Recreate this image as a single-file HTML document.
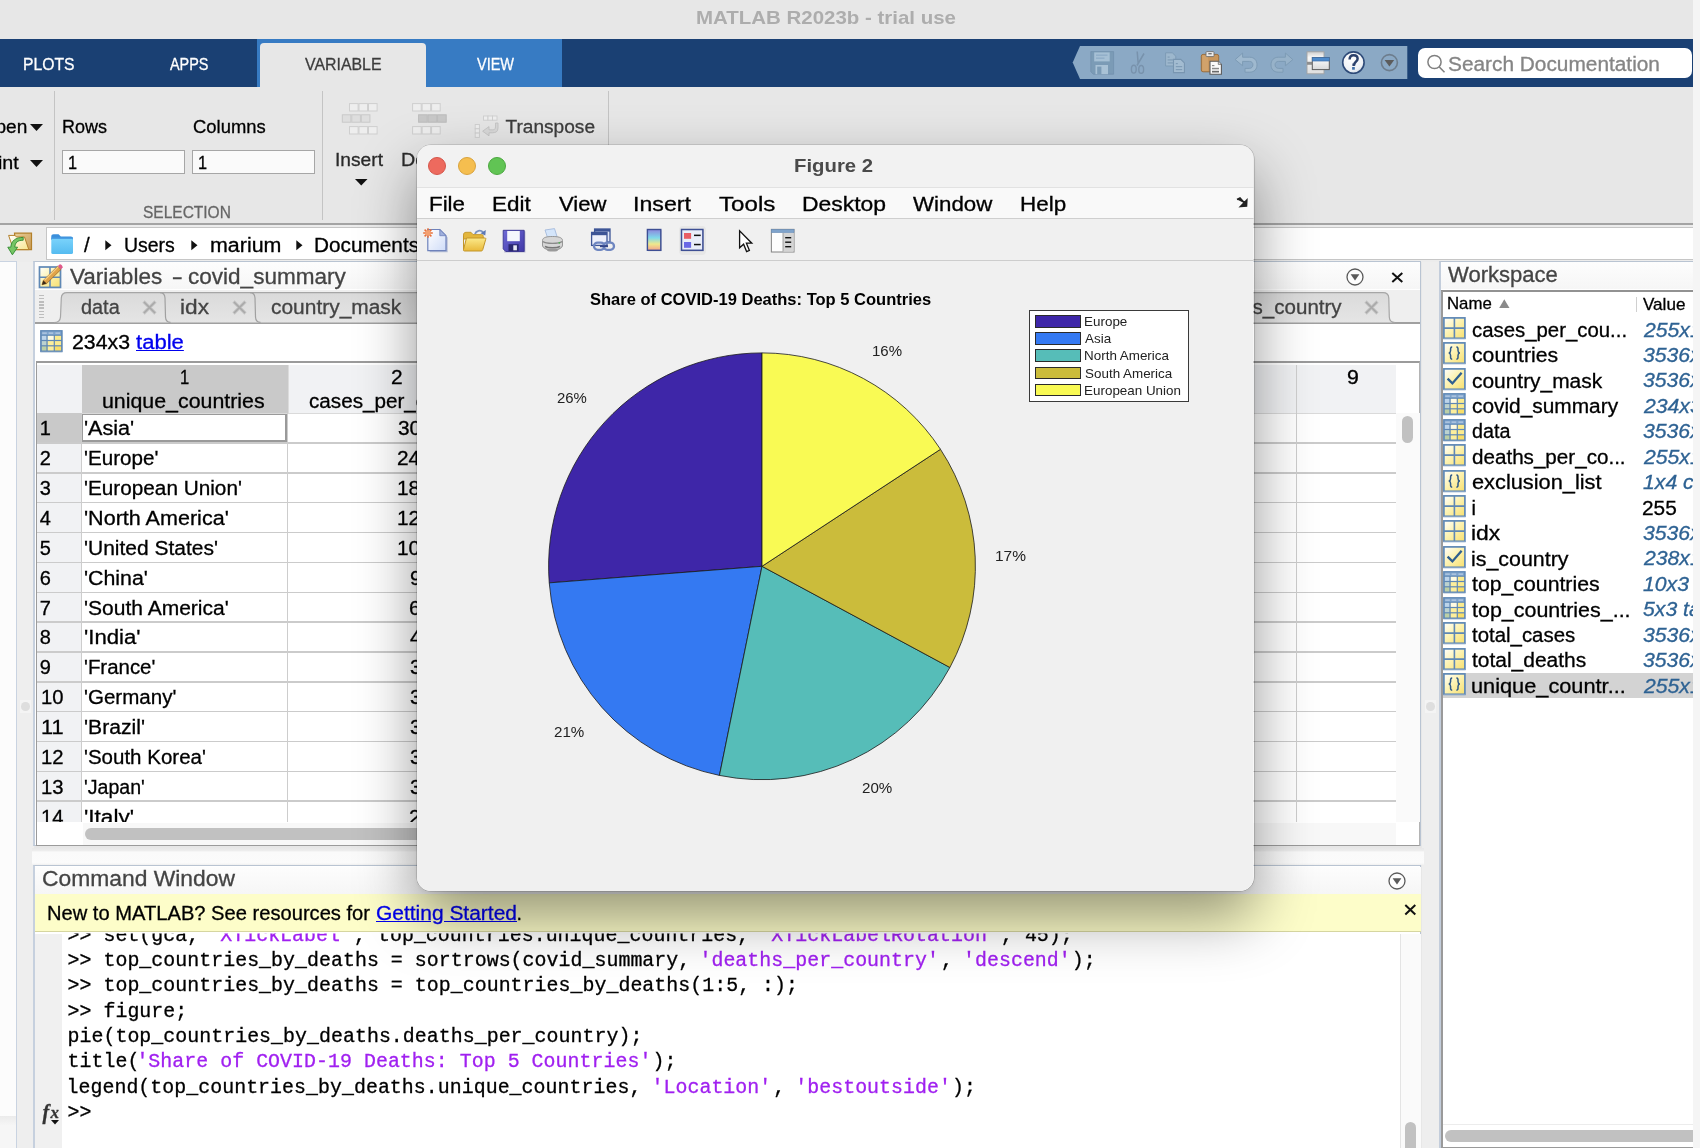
<!DOCTYPE html>
<html><head><meta charset="utf-8">
<style>
*{box-sizing:border-box;margin:0;padding:0}
html,body{width:1700px;height:1148px;overflow:hidden;background:#f5f5f5;font-family:"Liberation Sans",sans-serif;}
.a{position:absolute}
.t{position:absolute;white-space:pre;line-height:1;color:#000;-webkit-text-stroke:0.3px}
#win{position:absolute;left:0;top:0;width:1693px;height:1148px;background:#e7e7e7;overflow:hidden}
#win,#fig{will-change:transform}
#fig{position:absolute;left:0;top:0;width:1700px;height:1148px;clip-path:inset(145px 446.5px 257px 417px round 14px);background:#f0f0f0}
#figsh{position:absolute;left:417px;top:145px;width:836.5px;height:746px;border-radius:14px;box-shadow:0 0 0 0.6px rgba(0,0,0,0.22),0 26px 60px rgba(0,0,0,0.42),0 2px 5px rgba(0,0,0,0.06)}
.ns{-webkit-text-stroke:0}

.sep{position:absolute;width:1px;background:#c4c4c4}
.hl{position:absolute;height:1px;background:#c8c8c8}
.vl{position:absolute;width:1px;background:#c8c8c8}

</style></head><body>
<div id="win">
<div class="a" style="left:0;top:39px;width:1693px;height:48px;background:#1a4073"></div>
<div class="a" style="left:256.5px;top:39px;width:305px;height:48px;background:#377bc3"></div>
<div class="a" style="left:259.5px;top:43px;width:166px;height:44px;background:#e7e7e7;border-radius:4px 4px 0 0"></div>
<svg class="a" style="left:1072px;top:46px" width="336" height="33"><polygon points="0.7,16.5 8,0 335.3,0 335.3,33 8,33" fill="#8ba9c5"/></svg>
<div class="a" style="left:1417.8px;top:48px;width:274.4px;height:30.2px;background:#fff;border-radius:7px"></div>
<svg class="a" style="left:1425px;top:52px" width="22" height="22"><circle cx="9.5" cy="10" r="6.6" fill="none" stroke="#808080" stroke-width="1.5"/><line x1="14.3" y1="15" x2="19.5" y2="20.3" stroke="#808080" stroke-width="1.6"/></svg>
<div class="sep" style="left:54px;top:91px;height:129px"></div>
<div class="sep" style="left:322px;top:91px;height:129px"></div>
<div class="sep" style="left:607.5px;top:91px;height:129px"></div>
<svg class="a" style="left:30px;top:123.5px" width="14" height="8"><polygon points="0,0 13,0 6.5,7" fill="#111"/></svg>
<svg class="a" style="left:30px;top:159.5px" width="14" height="8"><polygon points="0,0 13,0 6.5,7" fill="#111"/></svg>
<div class="a" style="left:62px;top:149.5px;width:123px;height:24.3px;background:#fafafa;border:1px solid #a6a6a6"></div>
<div class="a" style="left:192px;top:149.5px;width:123px;height:24.3px;background:#fafafa;border:1px solid #a6a6a6"></div>
<svg class="a" style="left:354.5px;top:179px" width="14" height="8"><polygon points="0,0 12.5,0 6.25,6.5" fill="#111"/></svg>
<div class="a" style="left:0;top:223px;width:1693px;height:2px;background:#a4a4a4"></div>
<div class="a" style="left:0;top:225px;width:1693px;height:37px;background:#ececec"></div>
<div class="a" style="left:46px;top:227px;width:1660px;height:32.5px;background:#fff;border:1px solid #c6c6c6"></div>
<svg class="a" style="left:105px;top:239.5px" width="8" height="11"><polygon points="0.3,0.3 6.5,5.3 0.3,10.3" fill="#111"/></svg>
<svg class="a" style="left:190.5px;top:239.5px" width="8" height="11"><polygon points="0.3,0.3 6.5,5.3 0.3,10.3" fill="#111"/></svg>
<svg class="a" style="left:295.5px;top:239.5px" width="8" height="11"><polygon points="0.3,0.3 6.5,5.3 0.3,10.3" fill="#111"/></svg>
<div class="a" style="left:17px;top:262px;width:17px;height:890px;background:#eeeeee"></div>
<div class="a" style="left:1422px;top:262px;width:17px;height:890px;background:#eeeeee"></div>
<div class="a" style="left:0;top:261.3px;width:17px;height:854.7px;background:#fcfcfc;border-right:1.2px solid #c9d3e1;border-top:1px solid #c9d3e1"></div>
<div class="a" style="left:0;top:1116px;width:17px;height:32px;background:linear-gradient(#ebebeb,#f6f6f6 30%);border-right:1.2px solid #c9d3e1"></div>
<div class="a" style="left:19.5px;top:700px;width:11.5px;height:12.5px;background:#f4f4f4"></div><div class="a" style="left:21px;top:702px;width:8.5px;height:8.5px;border-radius:50%;background:#dedede"></div>
<div class="a" style="left:1424.5px;top:700px;width:11.5px;height:12.5px;background:#f4f4f4"></div><div class="a" style="left:1426px;top:702px;width:8.5px;height:8.5px;border-radius:50%;background:#dedede"></div>
<div class="a" style="left:32.8px;top:260.7px;width:1388.7px;height:585.8px;background:#fff;border:1.5px solid #b9c4d2;border-left:2.2px solid #c6d0de"></div>
<div class="a" style="left:35px;top:262.2px;width:1385px;height:27.3px;background:linear-gradient(#fdfdfd,#f6f6f6)"></div>
<div class="a" style="left:35px;top:289.5px;width:1385px;height:33px;background:#efefef"></div>
<div class="a" style="left:35px;top:321.6px;width:1385px;height:2px;background:#a0a0a0"></div>
<div class="a" style="left:38.8px;top:295.3px;width:4.8px;height:23px;background:repeating-linear-gradient(#bdbdbd 0,#bdbdbd 1.3px,transparent 1.3px,transparent 3.1px)"></div>
<svg class="a" style="left:52px;top:290px" width="1345" height="34"><defs><linearGradient id="gtb60" x1="0" y1="0" x2="0" y2="1"><stop offset="0" stop-color="#dadada"/><stop offset="1" stop-color="#e5e5e5"/></linearGradient></defs><path d="M2,32.5 C6.5,32.5 8.2,31 8.5,27 L9.3,8 C9.5,4 11,2.6 15,2.6 L1331,2.6 C1335,2.6 1336.6,4 1336.8,8 L1337.3,27 C1337.5,31 1339,32.5 1343,32.5" fill="url(#gtb60)" stroke="#a6a6a6" stroke-width="1.2"/></svg>
<svg class="a" style="left:157.3px;top:290px" width="16" height="34"><path d="M3,2.6 C6.5,2.6 7.8,4 8,8 L8.5,27 C8.7,31 10,32.3 13.5,32.3" fill="none" stroke="#a0a0a0" stroke-width="1.2"/></svg>
<svg class="a" style="left:247.3px;top:290px" width="16" height="34"><path d="M3,2.6 C6.5,2.6 7.8,4 8,8 L8.5,27 C8.7,31 10,32.3 13.5,32.3" fill="none" stroke="#a0a0a0" stroke-width="1.2"/></svg>
<svg class="a" style="left:141.5px;top:300px" width="15" height="15"><path d="M1.5,1.5 L13.5,13.5 M13.5,1.5 L1.5,13.5" stroke="#c4c4c4" stroke-width="3.2" fill="none"/><path d="M2,2 L13,13 M13,2 L2,13" stroke="#a8a8a8" stroke-width="1.5" fill="none"/></svg>
<svg class="a" style="left:231.5px;top:300px" width="15" height="15"><path d="M1.5,1.5 L13.5,13.5 M13.5,1.5 L1.5,13.5" stroke="#c4c4c4" stroke-width="3.2" fill="none"/><path d="M2,2 L13,13 M13,2 L2,13" stroke="#a8a8a8" stroke-width="1.5" fill="none"/></svg>
<svg class="a" style="left:1364px;top:300px" width="15" height="15"><path d="M1.5,1.5 L13.5,13.5 M13.5,1.5 L1.5,13.5" stroke="#c4c4c4" stroke-width="3.2" fill="none"/><path d="M2,2 L13,13 M13,2 L2,13" stroke="#a8a8a8" stroke-width="1.5" fill="none"/></svg>
<svg class="a" style="left:1345px;top:266.5px" width="20" height="20"><circle cx="10" cy="10" r="7.999999999999999" fill="#fdfdfd" stroke="#5a5a5a" stroke-width="1.3"/><polygon points="5.6,7.3 14.4,7.3 10,13.6" fill="#5a5a5a"/></svg>
<svg class="a" style="left:1391px;top:272px" width="13" height="11"><path d="M1.3,1 L11.3,10 M11.3,1 L1.3,10" stroke="#111" stroke-width="2" fill="none"/></svg>
<div class="a" style="left:35.5px;top:360.5px;width:1384.0px;height:485.5px;border:2px solid #9b9b9b;border-bottom-width:1.5px;border-left-width:1.5px;border-right:1.2px solid #b4b4b4;background:#fff"></div>
<div class="a" style="left:37px;top:364.5px;width:44.5px;height:48.5px;background:#f1f2f4"></div>
<div class="a" style="left:81.5px;top:364.5px;width:206px;height:48.5px;background:#c9c9c9"></div>
<div class="a" style="left:288.5px;top:364.5px;width:1107px;height:48.5px;background:#f1f2f4"></div>
<div class="vl" style="left:287.5px;top:364.5px;height:48.5px;background:#dcdcdc"></div>
<div class="vl" style="left:1296px;top:364.5px;height:48.5px;background:#cfcfcf"></div>
<div class="hl" style="left:37px;top:412.8px;width:1358.5px;height:1px;background:#dadada"></div>
<div class="a" style="left:37px;top:413.15px;width:44.5px;height:408.85px;background:#f1f2f4"></div>
<div class="a" style="left:37px;top:413.15px;width:44.5px;height:29.85px;background:#c9c9c9"></div>
<div class="hl" style="left:37px;top:442.25px;width:1358.5px;height:1.5px;background:#cbcbcb"></div>
<div class="hl" style="left:37px;top:472.10px;width:1358.5px;height:1.5px;background:#cbcbcb"></div>
<div class="hl" style="left:37px;top:501.95px;width:1358.5px;height:1.5px;background:#cbcbcb"></div>
<div class="hl" style="left:37px;top:531.80px;width:1358.5px;height:1.5px;background:#cbcbcb"></div>
<div class="hl" style="left:37px;top:561.65px;width:1358.5px;height:1.5px;background:#cbcbcb"></div>
<div class="hl" style="left:37px;top:591.50px;width:1358.5px;height:1.5px;background:#cbcbcb"></div>
<div class="hl" style="left:37px;top:621.35px;width:1358.5px;height:1.5px;background:#cbcbcb"></div>
<div class="hl" style="left:37px;top:651.20px;width:1358.5px;height:1.5px;background:#cbcbcb"></div>
<div class="hl" style="left:37px;top:681.05px;width:1358.5px;height:1.5px;background:#cbcbcb"></div>
<div class="hl" style="left:37px;top:710.90px;width:1358.5px;height:1.5px;background:#cbcbcb"></div>
<div class="hl" style="left:37px;top:740.75px;width:1358.5px;height:1.5px;background:#cbcbcb"></div>
<div class="hl" style="left:37px;top:770.60px;width:1358.5px;height:1.5px;background:#cbcbcb"></div>
<div class="hl" style="left:37px;top:800.45px;width:1358.5px;height:1.5px;background:#cbcbcb"></div>
<div class="vl" style="left:81.0px;top:413.15px;width:1.3px;height:408.85px;background:#cdcdcd"></div>
<div class="vl" style="left:287.0px;top:413.15px;width:1.3px;height:408.85px;background:#cdcdcd"></div>
<div class="vl" style="left:1295.5px;top:413.15px;width:1.3px;height:408.85px;background:#cdcdcd"></div>
<div class="a" style="left:82.3px;top:413.75px;width:204.6px;height:28.25px;border:1.5px solid #9a9a9a;border-bottom-width:2.4px;border-right-width:2px;background:#fff"></div>
<div class="a" style="left:37px;top:822px;width:1382px;height:22.5px;background:#fff"></div>
<div class="a" style="left:37px;top:822px;width:1382px;height:22.5px;background:#fff"></div>
<div class="a" style="left:82.5px;top:822.5px;width:1313px;height:22px;background:#f8f8f8"></div>
<div class="a" style="left:85px;top:828.2px;width:1100px;height:11.6px;border-radius:6px;background:#c1c1c1"></div>
<div class="a" style="left:1395.5px;top:413px;width:24px;height:409px;background:#fafafa"></div>
<div class="a" style="left:1402px;top:415.6px;width:11.4px;height:27px;border-radius:6px;background:#c1c1c1"></div>
<div class="a" style="left:32px;top:847.6px;width:1392px;height:17px;background:linear-gradient(#e8e8e8 0%,#ececec 14%,#fafafa 24%,#fbfbfb 88%,#f0f0f0 100%)"></div>
<div class="a" style="left:32.8px;top:865px;width:1388.7px;height:290px;background:#fff;border:1.5px solid #b9c4d2;border-left:2.2px solid #c6d0de"></div>
<div class="a" style="left:35px;top:866.5px;width:1386px;height:27px;background:linear-gradient(#fdfdfd,#f6f6f6)"></div>
<div class="a" style="left:35px;top:893.5px;width:1385px;height:1.5px;background:#d5d5d5"></div>
<svg class="a" style="left:1387px;top:870.6px" width="20" height="20"><circle cx="10" cy="10" r="7.999999999999999" fill="#fdfdfd" stroke="#5a5a5a" stroke-width="1.3"/><polygon points="5.6,7.3 14.4,7.3 10,13.6" fill="#5a5a5a"/></svg>
<div class="a" style="left:35px;top:894.4px;width:1386.2px;height:37.6px;background:#fdfdc9;border-bottom:1.5px solid #d6d6a0"></div>
<svg class="a" style="left:1404px;top:904px" width="13" height="12"><path d="M1.3,1 L11.3,10.5 M11.3,1 L1.3,10.5" stroke="#111" stroke-width="2" fill="none"/></svg>
<div class="a" style="left:35px;top:933.5px;width:27px;height:220px;background:#f0f0f0"></div>
<div class="a" style="left:1399.5px;top:933.5px;width:21px;height:220px;background:#fafafa;border-left:1px solid #e4e4e4"></div>
<div class="a" style="left:1405px;top:1121.5px;width:11.4px;height:40px;border-radius:6px;background:#c1c1c1"></div>
<svg class="a" style="left:51px;top:1119.5px" width="9" height="5"><polygon points="0,0 8,0 4,4.5" fill="#111"/></svg>
<div class="a" style="left:1438.6px;top:260.7px;width:262px;height:900px;background:#fff;border:1.5px solid #b9c4d2;border-left:2.4px solid #c3cddb"></div>
<div class="a" style="left:1441px;top:262.2px;width:260px;height:27px;background:linear-gradient(#fdfdfd,#f6f6f6)"></div>
<div class="a" style="left:1441px;top:289.7px;width:260px;height:1.9px;background:#929292"></div>
<div class="a" style="left:1441px;top:291px;width:1.7px;height:860px;background:#9a9a9a"></div>
<svg class="a" style="left:1498.5px;top:299px" width="11" height="10"><polygon points="5.3,0.3 10.5,9 0.2,9" fill="#8a8a8a"/></svg>
<div class="a" style="left:1636px;top:296.5px;width:1.4px;height:15.5px;background:#d0d0d0"></div>
<div class="a" style="left:1443.4px;top:672.8px;width:260px;height:24.8px;background:#d3d3d3"></div>
<div class="a" style="left:1443px;top:1124px;width:260px;height:1.3px;background:#ececec"></div>
<div class="a" style="left:1445px;top:1130px;width:300px;height:11.7px;border-radius:6px;background:#c1c1c1"></div>
<div class="a" style="left:1441px;top:1146.5px;width:260px;height:1.5px;background:#9a9a9a"></div>
<svg class="a" style="left:1089px;top:50px" width="27" height="26"><path d="M1.8,1.6 L24.6,1.6 L24.6,24.2 L4.3,24.2 L1.8,21.7 Z" fill="#7b9bb6" stroke="#7291ad" stroke-width="0.8"/><rect x="5.2" y="2.4" width="15.5" height="9" fill="#a6c0d5"/><rect x="7" y="4.6" width="11.5" height="1.1" fill="#8ba9c3"/><rect x="7" y="7.6" width="8.5" height="1.1" fill="#8ba9c3"/><rect x="6.5" y="15" width="12.5" height="9.2" fill="#a9c2d6"/><rect x="8.2" y="16.6" width="4.2" height="7.6" fill="#7b9bb6"/></svg>
<svg class="a" style="left:1128px;top:50px" width="20" height="26"><path d="M9.2,1.5 L10.2,14 M16,3.5 L9,15.5" stroke="#7892ac" stroke-width="1.5" fill="none"/><ellipse cx="5.8" cy="19.2" rx="2.4" ry="3.9" fill="none" stroke="#7892ac" stroke-width="1.4"/><ellipse cx="13.2" cy="19.4" rx="2.4" ry="3.9" fill="none" stroke="#7892ac" stroke-width="1.4"/></svg>
<svg class="a" style="left:1163px;top:50px" width="25" height="26"><path d="M2.6,2.8 L9.3,2.8 L12.8,6.2 L12.8,16 L2.6,16 Z" fill="#9db7cd" stroke="#7d9bb5" stroke-width="1"/><path d="M10.5,9.4 L17.8,9.4 L21.4,12.9 L21.4,22.6 L10.5,22.6 Z" fill="#a3bcd1" stroke="#7895b0" stroke-width="1.1"/><g fill="#7f9cb6"><rect x="4.6" y="6.5" width="2" height="1.2"/><rect x="4.6" y="9.3" width="6" height="1.2"/><rect x="4.6" y="12.3" width="6" height="1.2"/><rect x="12.8" y="13" width="2" height="1.2"/><rect x="12.8" y="16" width="6.4" height="1.2"/><rect x="12.8" y="19" width="6.4" height="1.2"/></g></svg>
<svg class="a" style="left:1199px;top:49px" width="26" height="28"><rect x="2.3" y="5.4" width="17.4" height="17.4" rx="1.8" fill="#c8965c" stroke="#9c6f3e" stroke-width="1"/><rect x="3.2" y="6.3" width="6" height="15.6" fill="#d7aa74" opacity="0.6"/><rect x="7" y="2.6" width="8" height="5" rx="0.8" fill="#ececec" stroke="#707070" stroke-width="0.9"/><rect x="9.3" y="4" width="3.4" height="1.4" fill="#777"/><path d="M11,12.3 L19.3,12.3 L22.4,15.4 L22.4,25.2 L11,25.2 Z" fill="#fafafa" stroke="#5a5a5a" stroke-width="1.1"/><path d="M19.3,12.3 L19.3,15.4 L22.4,15.4" fill="#ddd" stroke="#5a5a5a" stroke-width="0.7"/><g fill="#8a8a8a"><rect x="13" y="16" width="2.4" height="1.2"/><rect x="13" y="18.8" width="7" height="1.5"/><rect x="13" y="21.8" width="7" height="1.7" fill="#6a6a6a"/></g></svg>
<svg class="a" style="left:1233px;top:50px" width="27" height="26"><path d="M2.2,9.6 L9.6,3 L9.6,7.2 L16.5,7.2 C21.5,7.2 24,10.5 24,14.8 C24,19 21.5,22.2 16.5,22.2 L12,22.2 L12,18.4 L16.3,18.4 C18.7,18.4 19.9,16.8 19.9,14.8 C19.9,12.8 18.7,11.4 16.3,11.4 L9.6,11.4 L9.6,15.8 Z" fill="#9fb9cf" stroke="#7d9bb5" stroke-width="1"/></svg>
<svg class="a" style="left:1268px;top:50px" width="27" height="26"><path d="M24.8,9.6 L17.4,3 L17.4,7.2 L10.5,7.2 C5.5,7.2 3,10.5 3,14.8 C3,19 5.5,22.2 10.5,22.2 L15,22.2 L15,18.4 L10.7,18.4 C8.3,18.4 7.1,16.8 7.1,14.8 C7.1,12.8 8.3,11.4 10.7,11.4 L17.4,11.4 L17.4,15.8 Z" fill="#97b2c9" stroke="#7d9bb5" stroke-width="1"/></svg>
<svg class="a" style="left:1304px;top:49px" width="28" height="28"><defs><linearGradient id="gw1" x1="0" y1="0" x2="0" y2="1"><stop offset="0" stop-color="#cfcfcf"/><stop offset="0.25" stop-color="#f7f7f7"/><stop offset="1" stop-color="#dedede"/></linearGradient><linearGradient id="gw2" x1="0" y1="0" x2="0" y2="1"><stop offset="0" stop-color="#ffffff"/><stop offset="1" stop-color="#d9d9d9"/></linearGradient></defs><rect x="3" y="2.8" width="17" height="22" fill="url(#gw1)" stroke="#a2a2a2" stroke-width="0.9"/><rect x="3" y="12.8" width="5" height="3" fill="#8e8e8e"/><rect x="8.3" y="8.6" width="17" height="12" fill="url(#gw2)" stroke="#5c5c5c" stroke-width="1"/><rect x="8.3" y="8.6" width="17" height="3.4" fill="#4d8acb" stroke="#3c6ea8" stroke-width="0.7"/></svg>
<svg class="a" style="left:1340px;top:49px" width="28" height="28"><defs><radialGradient id="gh" cx="0.4" cy="0.3" r="0.8"><stop offset="0" stop-color="#ffffff"/><stop offset="0.7" stop-color="#eef1f5"/><stop offset="1" stop-color="#c9d2de"/></radialGradient></defs><circle cx="13.4" cy="13.6" r="10.7" fill="url(#gh)" stroke="#2d4a78" stroke-width="1.6"/><path d="M9.6,10.6 C9.6,7.6 11.4,6.2 13.6,6.2 C16,6.2 17.6,7.7 17.6,9.8 C17.6,12.6 14.2,12.8 14.2,15.8 L12.4,15.8" fill="none" stroke="#2b406b" stroke-width="2.5" stroke-linejoin="round"/><rect x="12.1" y="18" width="2.7" height="2.7" fill="#3f6ea8"/></svg>
<svg class="a" style="left:1378px;top:51px" width="24" height="24"><circle cx="11.4" cy="11.6" r="8" fill="none" stroke="#6d7d8d" stroke-width="1.6"/><polygon points="6.6,9 16.2,9 11.4,15.6" fill="#5c5c5c"/></svg>
<svg class="a" style="left:340px;top:102px" width="40" height="34"><rect x="9.5" y="1.6" width="8.6" height="7.4" fill="#eeeeee" stroke="#cfcfcf" stroke-width="1"/><rect x="19.0" y="1.6" width="8.6" height="7.4" fill="#eeeeee" stroke="#cfcfcf" stroke-width="1"/><rect x="28.5" y="1.6" width="8.6" height="7.4" fill="#eeeeee" stroke="#cfcfcf" stroke-width="1"/><rect x="2.3" y="12.8" width="8.6" height="7.4" fill="#dedede" stroke="#c9c9c9" stroke-width="1"/><rect x="11.8" y="12.8" width="8.6" height="7.4" fill="#dedede" stroke="#c9c9c9" stroke-width="1"/><rect x="21.3" y="12.8" width="8.6" height="7.4" fill="#dedede" stroke="#c9c9c9" stroke-width="1"/><rect x="9.5" y="24.6" width="8.6" height="7.4" fill="#eeeeee" stroke="#cfcfcf" stroke-width="1"/><rect x="19.0" y="24.6" width="8.6" height="7.4" fill="#eeeeee" stroke="#cfcfcf" stroke-width="1"/><rect x="28.5" y="24.6" width="8.6" height="7.4" fill="#eeeeee" stroke="#cfcfcf" stroke-width="1"/></svg>
<svg class="a" style="left:410px;top:102px" width="40" height="34"><rect x="2.6" y="1.6" width="8.6" height="7.4" fill="#eeeeee" stroke="#cfcfcf" stroke-width="1"/><rect x="12.1" y="1.6" width="8.6" height="7.4" fill="#eeeeee" stroke="#cfcfcf" stroke-width="1"/><rect x="21.6" y="1.6" width="8.6" height="7.4" fill="#eeeeee" stroke="#cfcfcf" stroke-width="1"/><rect x="8.6" y="12.8" width="8.6" height="7.4" fill="#c8c8c8" stroke="#bdbdbd" stroke-width="1"/><rect x="18.1" y="12.8" width="8.6" height="7.4" fill="#c8c8c8" stroke="#bdbdbd" stroke-width="1"/><rect x="27.6" y="12.8" width="8.6" height="7.4" fill="#c8c8c8" stroke="#bdbdbd" stroke-width="1"/><rect x="2.6" y="24.6" width="8.6" height="7.4" fill="#eeeeee" stroke="#cfcfcf" stroke-width="1"/><rect x="12.1" y="24.6" width="8.6" height="7.4" fill="#eeeeee" stroke="#cfcfcf" stroke-width="1"/><rect x="21.6" y="24.6" width="8.6" height="7.4" fill="#eeeeee" stroke="#cfcfcf" stroke-width="1"/></svg>
<svg class="a" style="left:473px;top:114px" width="28" height="26"><g fill="#f0f0f0" stroke="#cfcfcf" stroke-width="0.9"><rect x="10.5" y="2" width="4.5" height="4.2"/><rect x="15" y="2" width="4.5" height="4.2"/><rect x="19.5" y="2" width="4.5" height="4.2"/><rect x="2.2" y="10.5" width="4.2" height="4.3"/><rect x="2.2" y="14.8" width="4.2" height="4.3"/><rect x="2.2" y="19.1" width="4.2" height="4.3"/></g><path d="M22.5,9 L25,9 L25,14 C25,17.5 23,18.8 19.5,18.8 L16,18.8 L16,21.8 L9.6,17.2 L16,12.6 L16,15.8 L19.5,15.8 C21.5,15.8 22.5,15 22.5,13 Z" fill="#d9d9d9" stroke="#c2c2c2" stroke-width="0.8"/></svg>
<svg class="a" style="left:50px;top:232px" width="25" height="24"><defs><linearGradient id="gbf" x1="0" y1="0" x2="0" y2="1"><stop offset="0" stop-color="#7ad3fb"/><stop offset="1" stop-color="#55bbf0"/></linearGradient></defs><path d="M1.3,4.5 C1.3,3 2.2,2.2 3.6,2.2 L8.6,2.2 L10.8,4.4 L20.8,4.4 C22.3,4.4 23,5.2 23,6.6 L23,8 L1.3,8 Z" fill="#3b8fdb"/><rect x="1.3" y="6.4" width="21.7" height="15.6" rx="1.6" fill="url(#gbf)"/><rect x="1.3" y="5.6" width="21.7" height="1.4" fill="#4a9fe4"/></svg>
<svg class="a" style="left:6px;top:231px" width="28" height="26"><defs><linearGradient id="guf" x1="0" y1="0" x2="1" y2="1"><stop offset="0" stop-color="#e9cf98"/><stop offset="1" stop-color="#c99a55"/></linearGradient><linearGradient id="guf2" x1="0" y1="0" x2="1" y2="1"><stop offset="0" stop-color="#ffffff"/><stop offset="1" stop-color="#f7e58c"/></linearGradient></defs><path d="M8.5,2.2 L25.5,2.2 L25.5,18.6 L10,18.6 Z" fill="url(#guf)" stroke="#b3802a" stroke-width="1.2"/><path d="M2.6,4.4 L9,4.4 L10.5,6 L18.5,6 L22.8,18.6 L7.5,18.6 Z" fill="url(#guf2)" stroke="#b3802a" stroke-width="1"/><path d="M17.2,9.2 C11,9.2 9.2,12 8.8,16.2 L11.6,16.2 L6.4,23.8 L1.8,16.2 L4.8,16.2 C5.2,9.8 9.5,6.4 17.2,6.4 Z" fill="#76c563" stroke="#2f8a2f" stroke-width="0.9"/></svg>
<svg class="a" style="left:0;top:0" width="0" height="0"><defs><linearGradient id="gy" x1="0" y1="0" x2="1" y2="1"><stop offset="0" stop-color="#ffffff"/><stop offset="0.45" stop-color="#fdf3b4"/><stop offset="1" stop-color="#f7df6e"/></linearGradient><linearGradient id="gyb" x1="0" y1="0" x2="1" y2="1"><stop offset="0" stop-color="#fffbe0"/><stop offset="1" stop-color="#f8e070"/></linearGradient></defs></svg>
<svg class="a" style="left:1443.2px;top:317.0px" width="24" height="24"><rect x="0.9" y="0.9" width="21" height="20.4" fill="url(#gy)" stroke="#5f88b5" stroke-width="1.7"/><path d="M11.4,1 L11.4,21.2 M1,11.1 L21.8,11.1" stroke="#5f88b5" stroke-width="1.6"/><rect x="0.4" y="21.2" width="22" height="1" fill="#9fb7d0" opacity="0.7"/></svg>
<svg class="a" style="left:1443.2px;top:342.43px" width="24" height="24"><rect x="0.9" y="0.9" width="21" height="20.4" fill="url(#gy)" stroke="#5f88b5" stroke-width="1.7"/><path d="M9.2,5 C7.2,5 7.6,7 7.6,8.6 C7.6,10.2 7,10.9 5.8,11.1 C7,11.3 7.6,12 7.6,13.6 C7.6,15.2 7.2,17.2 9.2,17.2 M13.4,5 C15.4,5 15,7 15,8.6 C15,10.2 15.6,10.9 16.8,11.1 C15.6,11.3 15,12 15,13.6 C15,15.2 15.4,17.2 13.4,17.2" fill="none" stroke="#2f5a88" stroke-width="1.5"/><rect x="0.4" y="21.2" width="22" height="1" fill="#9fb7d0" opacity="0.7"/></svg>
<svg class="a" style="left:1443.2px;top:367.86px" width="24" height="24"><rect x="0.9" y="0.9" width="21" height="20.4" fill="url(#gy)" stroke="#5f88b5" stroke-width="1.7"/><path d="M4.6,10.6 L9.4,15.4 L18.6,4.8" fill="none" stroke="#2f5f90" stroke-width="2.3"/><rect x="0.4" y="21.2" width="22" height="1" fill="#9fb7d0" opacity="0.7"/></svg>
<svg class="a" style="left:1443.2px;top:393.28999999999996px" width="24" height="24"><rect x="0.8" y="0.8" width="21.2" height="20.6" fill="#5f88b5" stroke="#5f88b5" stroke-width="1.4"/><rect x="1.6" y="1.4" width="19.6" height="3.4" fill="#7ea3cc"/><rect x="2.2" y="2.6" width="4.6" height="1" fill="#c7d8ea"/><rect x="8.6" y="2.6" width="4.6" height="1" fill="#c7d8ea"/><rect x="15.4" y="2.6" width="4.6" height="1" fill="#c7d8ea"/><rect x="1.8" y="5.8" width="4.6" height="4.1" fill="#bcd4ea"/><rect x="7.7" y="5.8" width="6" height="4.1" fill="#fffbe2"/><rect x="14.9" y="5.8" width="6.2" height="4.1" fill="#fbeb8e"/><rect x="1.8" y="11.1" width="4.6" height="4.1" fill="#bcd2cf"/><rect x="7.7" y="11.1" width="6" height="4.1" fill="#fcee9c"/><rect x="14.9" y="11.1" width="6.2" height="4.1" fill="#fbeb8e"/><rect x="1.8" y="16.4" width="4.6" height="4.1" fill="#bccfa6"/><rect x="7.7" y="16.4" width="6" height="4.1" fill="#fcee9c"/><rect x="14.9" y="16.4" width="6.2" height="4.1" fill="#f8de68"/><rect x="0.4" y="21.6" width="22" height="1" fill="#9fb7d0" opacity="0.6"/></svg>
<svg class="a" style="left:1443.2px;top:418.72px" width="24" height="24"><rect x="0.8" y="0.8" width="21.2" height="20.6" fill="#5f88b5" stroke="#5f88b5" stroke-width="1.4"/><rect x="1.6" y="1.4" width="19.6" height="3.4" fill="#7ea3cc"/><rect x="2.2" y="2.6" width="4.6" height="1" fill="#c7d8ea"/><rect x="8.6" y="2.6" width="4.6" height="1" fill="#c7d8ea"/><rect x="15.4" y="2.6" width="4.6" height="1" fill="#c7d8ea"/><rect x="1.8" y="5.8" width="4.6" height="4.1" fill="#bcd4ea"/><rect x="7.7" y="5.8" width="6" height="4.1" fill="#fffbe2"/><rect x="14.9" y="5.8" width="6.2" height="4.1" fill="#fbeb8e"/><rect x="1.8" y="11.1" width="4.6" height="4.1" fill="#bcd2cf"/><rect x="7.7" y="11.1" width="6" height="4.1" fill="#fcee9c"/><rect x="14.9" y="11.1" width="6.2" height="4.1" fill="#fbeb8e"/><rect x="1.8" y="16.4" width="4.6" height="4.1" fill="#bccfa6"/><rect x="7.7" y="16.4" width="6" height="4.1" fill="#fcee9c"/><rect x="14.9" y="16.4" width="6.2" height="4.1" fill="#f8de68"/><rect x="0.4" y="21.6" width="22" height="1" fill="#9fb7d0" opacity="0.6"/></svg>
<svg class="a" style="left:1443.2px;top:444.15px" width="24" height="24"><rect x="0.9" y="0.9" width="21" height="20.4" fill="url(#gy)" stroke="#5f88b5" stroke-width="1.7"/><path d="M11.4,1 L11.4,21.2 M1,11.1 L21.8,11.1" stroke="#5f88b5" stroke-width="1.6"/><rect x="0.4" y="21.2" width="22" height="1" fill="#9fb7d0" opacity="0.7"/></svg>
<svg class="a" style="left:1443.2px;top:469.58px" width="24" height="24"><rect x="0.9" y="0.9" width="21" height="20.4" fill="url(#gy)" stroke="#5f88b5" stroke-width="1.7"/><path d="M9.2,5 C7.2,5 7.6,7 7.6,8.6 C7.6,10.2 7,10.9 5.8,11.1 C7,11.3 7.6,12 7.6,13.6 C7.6,15.2 7.2,17.2 9.2,17.2 M13.4,5 C15.4,5 15,7 15,8.6 C15,10.2 15.6,10.9 16.8,11.1 C15.6,11.3 15,12 15,13.6 C15,15.2 15.4,17.2 13.4,17.2" fill="none" stroke="#2f5a88" stroke-width="1.5"/><rect x="0.4" y="21.2" width="22" height="1" fill="#9fb7d0" opacity="0.7"/></svg>
<svg class="a" style="left:1443.2px;top:495.01px" width="24" height="24"><rect x="0.9" y="0.9" width="21" height="20.4" fill="url(#gy)" stroke="#5f88b5" stroke-width="1.7"/><path d="M11.4,1 L11.4,21.2 M1,11.1 L21.8,11.1" stroke="#5f88b5" stroke-width="1.6"/><rect x="0.4" y="21.2" width="22" height="1" fill="#9fb7d0" opacity="0.7"/></svg>
<svg class="a" style="left:1443.2px;top:520.44px" width="24" height="24"><rect x="0.9" y="0.9" width="21" height="20.4" fill="url(#gy)" stroke="#5f88b5" stroke-width="1.7"/><path d="M11.4,1 L11.4,21.2 M1,11.1 L21.8,11.1" stroke="#5f88b5" stroke-width="1.6"/><rect x="0.4" y="21.2" width="22" height="1" fill="#9fb7d0" opacity="0.7"/></svg>
<svg class="a" style="left:1443.2px;top:545.87px" width="24" height="24"><rect x="0.9" y="0.9" width="21" height="20.4" fill="url(#gy)" stroke="#5f88b5" stroke-width="1.7"/><path d="M4.6,10.6 L9.4,15.4 L18.6,4.8" fill="none" stroke="#2f5f90" stroke-width="2.3"/><rect x="0.4" y="21.2" width="22" height="1" fill="#9fb7d0" opacity="0.7"/></svg>
<svg class="a" style="left:1443.2px;top:571.3px" width="24" height="24"><rect x="0.8" y="0.8" width="21.2" height="20.6" fill="#5f88b5" stroke="#5f88b5" stroke-width="1.4"/><rect x="1.6" y="1.4" width="19.6" height="3.4" fill="#7ea3cc"/><rect x="2.2" y="2.6" width="4.6" height="1" fill="#c7d8ea"/><rect x="8.6" y="2.6" width="4.6" height="1" fill="#c7d8ea"/><rect x="15.4" y="2.6" width="4.6" height="1" fill="#c7d8ea"/><rect x="1.8" y="5.8" width="4.6" height="4.1" fill="#bcd4ea"/><rect x="7.7" y="5.8" width="6" height="4.1" fill="#fffbe2"/><rect x="14.9" y="5.8" width="6.2" height="4.1" fill="#fbeb8e"/><rect x="1.8" y="11.1" width="4.6" height="4.1" fill="#bcd2cf"/><rect x="7.7" y="11.1" width="6" height="4.1" fill="#fcee9c"/><rect x="14.9" y="11.1" width="6.2" height="4.1" fill="#fbeb8e"/><rect x="1.8" y="16.4" width="4.6" height="4.1" fill="#bccfa6"/><rect x="7.7" y="16.4" width="6" height="4.1" fill="#fcee9c"/><rect x="14.9" y="16.4" width="6.2" height="4.1" fill="#f8de68"/><rect x="0.4" y="21.6" width="22" height="1" fill="#9fb7d0" opacity="0.6"/></svg>
<svg class="a" style="left:1443.2px;top:596.73px" width="24" height="24"><rect x="0.8" y="0.8" width="21.2" height="20.6" fill="#5f88b5" stroke="#5f88b5" stroke-width="1.4"/><rect x="1.6" y="1.4" width="19.6" height="3.4" fill="#7ea3cc"/><rect x="2.2" y="2.6" width="4.6" height="1" fill="#c7d8ea"/><rect x="8.6" y="2.6" width="4.6" height="1" fill="#c7d8ea"/><rect x="15.4" y="2.6" width="4.6" height="1" fill="#c7d8ea"/><rect x="1.8" y="5.8" width="4.6" height="4.1" fill="#bcd4ea"/><rect x="7.7" y="5.8" width="6" height="4.1" fill="#fffbe2"/><rect x="14.9" y="5.8" width="6.2" height="4.1" fill="#fbeb8e"/><rect x="1.8" y="11.1" width="4.6" height="4.1" fill="#bcd2cf"/><rect x="7.7" y="11.1" width="6" height="4.1" fill="#fcee9c"/><rect x="14.9" y="11.1" width="6.2" height="4.1" fill="#fbeb8e"/><rect x="1.8" y="16.4" width="4.6" height="4.1" fill="#bccfa6"/><rect x="7.7" y="16.4" width="6" height="4.1" fill="#fcee9c"/><rect x="14.9" y="16.4" width="6.2" height="4.1" fill="#f8de68"/><rect x="0.4" y="21.6" width="22" height="1" fill="#9fb7d0" opacity="0.6"/></svg>
<svg class="a" style="left:1443.2px;top:622.16px" width="24" height="24"><rect x="0.9" y="0.9" width="21" height="20.4" fill="url(#gy)" stroke="#5f88b5" stroke-width="1.7"/><path d="M11.4,1 L11.4,21.2 M1,11.1 L21.8,11.1" stroke="#5f88b5" stroke-width="1.6"/><rect x="0.4" y="21.2" width="22" height="1" fill="#9fb7d0" opacity="0.7"/></svg>
<svg class="a" style="left:1443.2px;top:647.5899999999999px" width="24" height="24"><rect x="0.9" y="0.9" width="21" height="20.4" fill="url(#gy)" stroke="#5f88b5" stroke-width="1.7"/><path d="M11.4,1 L11.4,21.2 M1,11.1 L21.8,11.1" stroke="#5f88b5" stroke-width="1.6"/><rect x="0.4" y="21.2" width="22" height="1" fill="#9fb7d0" opacity="0.7"/></svg>
<svg class="a" style="left:1443.2px;top:673.02px" width="24" height="24"><rect x="0.9" y="0.9" width="21" height="20.4" fill="url(#gy)" stroke="#5f88b5" stroke-width="1.7"/><path d="M9.2,5 C7.2,5 7.6,7 7.6,8.6 C7.6,10.2 7,10.9 5.8,11.1 C7,11.3 7.6,12 7.6,13.6 C7.6,15.2 7.2,17.2 9.2,17.2 M13.4,5 C15.4,5 15,7 15,8.6 C15,10.2 15.6,10.9 16.8,11.1 C15.6,11.3 15,12 15,13.6 C15,15.2 15.4,17.2 13.4,17.2" fill="none" stroke="#2f5a88" stroke-width="1.5"/><rect x="0.4" y="21.2" width="22" height="1" fill="#9fb7d0" opacity="0.7"/></svg>
<svg class="a" style="left:39.7px;top:330.2px" width="24" height="24"><rect x="0.8" y="0.8" width="21.2" height="20.6" fill="#5f88b5" stroke="#5f88b5" stroke-width="1.4"/><rect x="1.6" y="1.4" width="19.6" height="3.4" fill="#7ea3cc"/><rect x="2.2" y="2.6" width="4.6" height="1" fill="#c7d8ea"/><rect x="8.6" y="2.6" width="4.6" height="1" fill="#c7d8ea"/><rect x="15.4" y="2.6" width="4.6" height="1" fill="#c7d8ea"/><rect x="1.8" y="5.8" width="4.6" height="4.1" fill="#bcd4ea"/><rect x="7.7" y="5.8" width="6" height="4.1" fill="#fffbe2"/><rect x="14.9" y="5.8" width="6.2" height="4.1" fill="#fbeb8e"/><rect x="1.8" y="11.1" width="4.6" height="4.1" fill="#bcd2cf"/><rect x="7.7" y="11.1" width="6" height="4.1" fill="#fcee9c"/><rect x="14.9" y="11.1" width="6.2" height="4.1" fill="#fbeb8e"/><rect x="1.8" y="16.4" width="4.6" height="4.1" fill="#bccfa6"/><rect x="7.7" y="16.4" width="6" height="4.1" fill="#fcee9c"/><rect x="14.9" y="16.4" width="6.2" height="4.1" fill="#f8de68"/><rect x="0.4" y="21.6" width="22" height="1" fill="#9fb7d0" opacity="0.6"/></svg>
<svg class="a" style="left:37.5px;top:263px" width="28" height="28"><rect x="1.5" y="4" width="21" height="20.4" fill="url(#gy)" stroke="#5f88b5" stroke-width="1.7"/><path d="M12,4 L12,24.4 M1.5,14.2 L22.5,14.2" stroke="#5f88b5" stroke-width="1.6"/><path d="M4,21.8 L5.4,17.4 L19.6,3.2 L23,6.4 L8.6,20.6 Z" fill="#e0a348" stroke="#9a6a28" stroke-width="0.8"/><path d="M4,21.8 L5.4,17.4 L8.6,20.6 Z" fill="#3a2a1a"/><path d="M19.6,3.2 L21.6,1.4 C22.6,0.8 24.8,2.8 24.6,4.2 L23,6.4 Z" fill="#e05a8a"/><path d="M6.6,17.2 L20.4,3.6" stroke="#f6cf85" stroke-width="1.2"/></svg>
<div class="t ns" style="left:695.90px;top:8.66px;font-size:18.6px;color:#adadad;font-weight:bold;transform:scaleX(1.1004);transform-origin:0 0;">MATLAB R2023b - trial use</div>
<div class="t" style="left:22.85px;top:55.97px;font-size:17.4px;color:#fff;transform:scaleX(0.9022);transform-origin:0 0;">PLOTS</div>
<div class="t" style="left:170.00px;top:55.97px;font-size:17.4px;color:#fff;transform:scaleX(0.8297);transform-origin:0 0;">APPS</div>
<div class="t" style="left:304.50px;top:55.97px;font-size:17.4px;color:#3c3c3c;transform:scaleX(0.9138);transform-origin:0 0;">VARIABLE</div>
<div class="t" style="left:476.50px;top:55.97px;font-size:17.4px;color:#fff;transform:scaleX(0.8328);transform-origin:0 0;">VIEW</div>
<div class="t" style="left:1448.00px;top:54.81px;font-size:19.6px;color:#858585;transform:scaleX(1.0634);transform-origin:0 0;">Search Documentation</div>
<div class="t" style="left:-4.60px;top:117.43px;font-size:19.1px;color:#000;">pen</div>
<div class="t" style="left:-1.53px;top:153.33px;font-size:19.1px;color:#000;transform:scaleX(1.0300);transform-origin:0 0;">int</div>
<div class="t" style="left:61.76px;top:117.43px;font-size:19.1px;color:#000;transform:scaleX(0.9438);transform-origin:0 0;">Rows</div>
<div class="t" style="left:192.50px;top:117.43px;font-size:19.1px;color:#000;transform:scaleX(0.9653);transform-origin:0 0;">Columns</div>
<div class="t" style="left:67.74px;top:153.33px;font-size:19.1px;color:#000;transform:scaleX(0.8556);transform-origin:0 0;">1</div>
<div class="t" style="left:197.94px;top:153.33px;font-size:19.1px;color:#000;transform:scaleX(0.8556);transform-origin:0 0;">1</div>
<div class="t" style="left:143.00px;top:204.14px;font-size:17.2px;color:#666;transform:scaleX(0.9020);transform-origin:0 0;">SELECTION</div>
<div class="t" style="left:335.19px;top:150.33px;font-size:19.1px;color:#2a2a2a;transform:scaleX(1.0053);transform-origin:0 0;">Insert</div>
<div class="t" style="left:400.97px;top:150.33px;font-size:19.1px;color:#2a2a2a;transform:scaleX(1.0300);transform-origin:0 0;">Delete</div>
<div class="t" style="left:505.50px;top:117.23px;font-size:19.1px;color:#3d3d3d;">Transpose</div>
<div class="t" style="left:83.75px;top:236.01px;font-size:19.6px;color:#000;transform:scaleX(1.0417);transform-origin:0 0;">/</div>
<div class="t" style="left:124.01px;top:236.01px;font-size:19.6px;color:#000;transform:scaleX(0.9927);transform-origin:0 0;">Users</div>
<div class="t" style="left:209.91px;top:236.01px;font-size:19.6px;color:#000;transform:scaleX(1.0939);transform-origin:0 0;">marium</div>
<div class="t" style="left:313.94px;top:236.01px;font-size:19.6px;color:#000;transform:scaleX(1.0600);transform-origin:0 0;">Documents</div>
<div class="t" style="left:70.15px;top:265.82px;font-size:21.6px;color:#444;transform:scaleX(1.0421);transform-origin:0 0;">Variables</div>
<div class="t" style="left:172.80px;top:265.82px;font-size:21.6px;color:#444;transform:scaleX(0.7083);transform-origin:0 0;">–</div>
<div class="t" style="left:188.20px;top:265.82px;font-size:21.6px;color:#444;transform:scaleX(1.0436);transform-origin:0 0;">covid_summary</div>
<div class="t" style="left:81.00px;top:297.61px;font-size:19.6px;color:#444;transform:scaleX(1.0147);transform-origin:0 0;">data</div>
<div class="t" style="left:179.54px;top:297.61px;font-size:19.6px;color:#444;transform:scaleX(1.1567);transform-origin:0 0;">idx</div>
<div class="t" style="left:270.50px;top:297.61px;font-size:19.6px;color:#444;transform:scaleX(1.0682);transform-origin:0 0;">country_mask</div>
<div class="t" style="left:1248.45px;top:297.61px;font-size:19.6px;color:#444;transform:scaleX(1.0485);transform-origin:0 0;">is_country</div>
<div class="t" style="left:72.30px;top:333.48px;font-size:19.4px;color:#000;transform:scaleX(1.0971);transform-origin:0 0;">234x3</div>
<div class="t" style="left:136.30px;top:333.48px;font-size:19.4px;color:#0000ee;text-decoration:underline;transform:scaleX(1.1378);transform-origin:0 0;">table</div>
<div class="t" style="left:179.94px;top:367.98px;font-size:19.4px;color:#000;transform:scaleX(0.8556);transform-origin:0 0;">1</div>
<div class="t" style="left:101.90px;top:391.68px;font-size:19.4px;color:#000;transform:scaleX(1.1010);transform-origin:0 0;">unique_countries</div>
<div class="t" style="left:391.25px;top:367.98px;font-size:19.4px;color:#000;transform:scaleX(1.0800);transform-origin:0 0;">2</div>
<div class="t" style="left:308.90px;top:391.51px;font-size:19.6px;color:#000;transform:scaleX(1.0550);transform-origin:0 0;">cases_per_country</div>
<div class="t" style="left:1347.00px;top:368.08px;font-size:19.4px;color:#000;transform:scaleX(1.1000);transform-origin:0 0;">9</div>
<div class="t" style="left:39.80px;top:418.47px;font-size:20px;color:#000;">1</div>
<div class="t" style="left:83.92px;top:418.47px;font-size:20px;color:#000;transform:scaleX(1.0788);transform-origin:0 0;">'Asia'</div>
<div class="t" style="left:398.30px;top:418.47px;font-size:20px;color:#000;transform:scaleX(1.0400);transform-origin:0 0;">30</div>
<div class="t" style="left:39.80px;top:448.32px;font-size:20px;color:#000;">2</div>
<div class="t" style="left:83.97px;top:448.32px;font-size:20px;color:#000;transform:scaleX(1.0311);transform-origin:0 0;">'Europe'</div>
<div class="t" style="left:397.26px;top:448.32px;font-size:20px;color:#000;transform:scaleX(1.0400);transform-origin:0 0;">24</div>
<div class="t" style="left:39.80px;top:478.17px;font-size:20px;color:#000;">3</div>
<div class="t" style="left:83.96px;top:478.17px;font-size:20px;color:#000;transform:scaleX(1.0374);transform-origin:0 0;">'European Union'</div>
<div class="t" style="left:397.26px;top:478.17px;font-size:20px;color:#000;transform:scaleX(1.0400);transform-origin:0 0;">18</div>
<div class="t" style="left:39.80px;top:508.02px;font-size:20px;color:#000;">4</div>
<div class="t" style="left:83.92px;top:508.02px;font-size:20px;color:#000;transform:scaleX(1.0776);transform-origin:0 0;">'North America'</div>
<div class="t" style="left:397.26px;top:508.02px;font-size:20px;color:#000;transform:scaleX(1.0400);transform-origin:0 0;">12</div>
<div class="t" style="left:39.80px;top:537.87px;font-size:20px;color:#000;">5</div>
<div class="t" style="left:83.95px;top:537.87px;font-size:20px;color:#000;transform:scaleX(1.0486);transform-origin:0 0;">'United States'</div>
<div class="t" style="left:397.26px;top:537.87px;font-size:20px;color:#000;transform:scaleX(1.0400);transform-origin:0 0;">10</div>
<div class="t" style="left:39.80px;top:567.72px;font-size:20px;color:#000;">6</div>
<div class="t" style="left:83.93px;top:567.72px;font-size:20px;color:#000;transform:scaleX(1.0676);transform-origin:0 0;">'China'</div>
<div class="t" style="left:410.00px;top:567.72px;font-size:20px;color:#000;transform:scaleX(1.0400);transform-origin:0 0;">9</div>
<div class="t" style="left:39.80px;top:597.57px;font-size:20px;color:#000;">7</div>
<div class="t" style="left:83.95px;top:597.57px;font-size:20px;color:#000;transform:scaleX(1.0512);transform-origin:0 0;">'South America'</div>
<div class="t" style="left:408.96px;top:597.57px;font-size:20px;color:#000;transform:scaleX(1.0400);transform-origin:0 0;">6</div>
<div class="t" style="left:39.80px;top:627.42px;font-size:20px;color:#000;">8</div>
<div class="t" style="left:83.89px;top:627.42px;font-size:20px;color:#000;transform:scaleX(1.1080);transform-origin:0 0;">'India'</div>
<div class="t" style="left:410.00px;top:627.42px;font-size:20px;color:#000;transform:scaleX(1.0400);transform-origin:0 0;">4</div>
<div class="t" style="left:39.80px;top:657.27px;font-size:20px;color:#000;">9</div>
<div class="t" style="left:83.98px;top:657.27px;font-size:20px;color:#000;transform:scaleX(1.0211);transform-origin:0 0;">'France'</div>
<div class="t" style="left:410.00px;top:657.27px;font-size:20px;color:#000;transform:scaleX(1.0400);transform-origin:0 0;">3</div>
<div class="t" style="left:40.59px;top:687.12px;font-size:20px;color:#000;transform:scaleX(1.0131);transform-origin:0 0;">10</div>
<div class="t" style="left:83.97px;top:687.12px;font-size:20px;color:#000;transform:scaleX(1.0277);transform-origin:0 0;">'Germany'</div>
<div class="t" style="left:410.00px;top:687.12px;font-size:20px;color:#000;transform:scaleX(1.0400);transform-origin:0 0;">3</div>
<div class="t" style="left:40.51px;top:716.97px;font-size:20px;color:#000;transform:scaleX(1.0897);transform-origin:0 0;">11</div>
<div class="t" style="left:83.94px;top:716.97px;font-size:20px;color:#000;transform:scaleX(1.0568);transform-origin:0 0;">'Brazil'</div>
<div class="t" style="left:410.00px;top:716.97px;font-size:20px;color:#000;transform:scaleX(1.0400);transform-origin:0 0;">3</div>
<div class="t" style="left:40.59px;top:746.82px;font-size:20px;color:#000;transform:scaleX(1.0131);transform-origin:0 0;">12</div>
<div class="t" style="left:83.97px;top:746.82px;font-size:20px;color:#000;transform:scaleX(1.0256);transform-origin:0 0;">'South Korea'</div>
<div class="t" style="left:410.00px;top:746.82px;font-size:20px;color:#000;transform:scaleX(1.0400);transform-origin:0 0;">3</div>
<div class="t" style="left:40.59px;top:776.67px;font-size:20px;color:#000;transform:scaleX(1.0131);transform-origin:0 0;">13</div>
<div class="t" style="left:84.02px;top:776.67px;font-size:20px;color:#000;transform:scaleX(0.9783);transform-origin:0 0;">'Japan'</div>
<div class="t" style="left:410.00px;top:776.67px;font-size:20px;color:#000;transform:scaleX(1.0400);transform-origin:0 0;">3</div>
<div class="t" style="left:40.59px;top:806.52px;font-size:20px;color:#000;transform:scaleX(1.0131);transform-origin:0 0;clip-path:inset(0 -50px 4.5px -5px);">14</div>
<div class="t" style="left:83.87px;top:806.52px;font-size:20px;color:#000;transform:scaleX(1.1295);transform-origin:0 0;clip-path:inset(0 -50px 4.5px -5px);">'Italy'</div>
<div class="t" style="left:408.96px;top:806.52px;font-size:20px;color:#000;transform:scaleX(1.0400);transform-origin:0 0;clip-path:inset(0 -50px 4.5px -5px);">2</div>
<div class="t" style="left:42.16px;top:868.08px;font-size:22px;color:#444;transform:scaleX(1.0381);transform-origin:0 0;">Command Window</div>
<div class="t" style="left:47.47px;top:904.31px;font-size:19.6px;color:#000;transform:scaleX(1.0276);transform-origin:0 0;">New to MATLAB? See resources for </div>
<div class="t" style="left:376.00px;top:904.31px;font-size:19.6px;color:#0000ee;text-decoration:underline;transform:scaleX(1.0696);transform-origin:0 0;">Getting Started</div>
<div class="t" style="left:516.50px;top:904.31px;font-size:19.6px;color:#000;">.</div>
<div class="t" style="left:67.50px;top:925.74px;font-size:19.9px;color:#000;font-family:'Liberation Mono';letter-spacing:0.0399px;clip-path:inset(7.8px 0 0 0);">&gt;&gt; set(gca, </div>
<div class="t" style="left:208.26px;top:925.74px;font-size:19.9px;color:#a020f0;font-family:'Liberation Mono';letter-spacing:0.0399px;clip-path:inset(7.8px 0 0 0);">'XTickLabel'</div>
<div class="t" style="left:354.02px;top:925.74px;font-size:19.9px;color:#000;font-family:'Liberation Mono';letter-spacing:0.0399px;clip-path:inset(7.8px 0 0 0);">, top_countries.unique_countries, </div>
<div class="t" style="left:759.34px;top:925.74px;font-size:19.9px;color:#a020f0;font-family:'Liberation Mono';letter-spacing:0.0399px;clip-path:inset(7.8px 0 0 0);">'XTickLabelRotation'</div>
<div class="t" style="left:1000.94px;top:925.74px;font-size:19.9px;color:#000;font-family:'Liberation Mono';letter-spacing:0.0399px;clip-path:inset(7.8px 0 0 0);">, 45);</div>
<div class="t" style="left:67.50px;top:951.04px;font-size:19.9px;color:#000;font-family:'Liberation Mono';letter-spacing:0.0399px;">&gt;&gt; top_countries_by_deaths = sortrows(covid_summary, </div>
<div class="t" style="left:699.44px;top:951.04px;font-size:19.9px;color:#a020f0;font-family:'Liberation Mono';letter-spacing:0.0399px;">'deaths_per_country'</div>
<div class="t" style="left:941.04px;top:951.04px;font-size:19.9px;color:#000;font-family:'Liberation Mono';letter-spacing:0.0399px;">, </div>
<div class="t" style="left:963.00px;top:951.04px;font-size:19.9px;color:#a020f0;font-family:'Liberation Mono';letter-spacing:0.0399px;">'descend'</div>
<div class="t" style="left:1071.82px;top:951.04px;font-size:19.9px;color:#000;font-family:'Liberation Mono';letter-spacing:0.0399px;">);</div>
<div class="t" style="left:67.50px;top:976.34px;font-size:19.9px;color:#000;font-family:'Liberation Mono';letter-spacing:0.0399px;">&gt;&gt; top_countries_by_deaths = top_countries_by_deaths(1:5, :);</div>
<div class="t" style="left:67.50px;top:1001.64px;font-size:19.9px;color:#000;font-family:'Liberation Mono';letter-spacing:0.0399px;">&gt;&gt; figure;</div>
<div class="t" style="left:67.50px;top:1026.94px;font-size:19.9px;color:#000;font-family:'Liberation Mono';letter-spacing:0.0399px;">pie(top_countries_by_deaths.deaths_per_country);</div>
<div class="t" style="left:67.50px;top:1052.24px;font-size:19.9px;color:#000;font-family:'Liberation Mono';letter-spacing:0.0399px;">title(</div>
<div class="t" style="left:136.38px;top:1052.24px;font-size:19.9px;color:#a020f0;font-family:'Liberation Mono';letter-spacing:0.0399px;">'Share of COVID-19 Deaths: Top 5 Countries'</div>
<div class="t" style="left:652.52px;top:1052.24px;font-size:19.9px;color:#000;font-family:'Liberation Mono';letter-spacing:0.0399px;">);</div>
<div class="t" style="left:66.50px;top:1077.54px;font-size:19.9px;color:#000;font-family:'Liberation Mono';letter-spacing:0.0399px;">legend(top_countries_by_deaths.unique_countries, </div>
<div class="t" style="left:651.52px;top:1077.54px;font-size:19.9px;color:#a020f0;font-family:'Liberation Mono';letter-spacing:0.0399px;">'Location'</div>
<div class="t" style="left:773.32px;top:1077.54px;font-size:19.9px;color:#000;font-family:'Liberation Mono';letter-spacing:0.0399px;">, </div>
<div class="t" style="left:795.28px;top:1077.54px;font-size:19.9px;color:#a020f0;font-family:'Liberation Mono';letter-spacing:0.0399px;">'bestoutside'</div>
<div class="t" style="left:952.02px;top:1077.54px;font-size:19.9px;color:#000;font-family:'Liberation Mono';letter-spacing:0.0399px;">);</div>
<div class="t" style="left:67.50px;top:1102.84px;font-size:19.9px;color:#000;font-family:'Liberation Mono';letter-spacing:0.0399px;">&gt;&gt;</div>
<div class="t" style="left:42.50px;top:1101.83px;font-size:20px;color:#333;font-family:'Liberation Serif';font-style:italic;font-weight:bold;">f</div>
<div class="t" style="left:50.50px;top:1104.33px;font-size:17px;color:#333;font-family:'Liberation Serif';font-style:italic;font-weight:bold;">x</div>
<div class="t" style="left:1448.00px;top:264.97px;font-size:21.3px;color:#444;transform:scaleX(1.0353);transform-origin:0 0;">Workspace</div>
<div class="t" style="left:1447.38px;top:295.42px;font-size:16.4px;color:#000;transform:scaleX(1.0233);transform-origin:0 0;">Name</div>
<div class="t" style="left:1642.60px;top:295.59px;font-size:16.2px;color:#000;transform:scaleX(1.0548);transform-origin:0 0;">Value</div>
<div class="t" style="left:1472.40px;top:319.77px;font-size:20px;color:#000;transform:scaleX(1.0182);transform-origin:0 0;">cases_per_cou...</div>
<div class="t" style="left:1644.45px;top:319.60px;font-size:20.2px;color:#2e6293;font-style:italic;transform:scaleX(1.0500);transform-origin:0 0;">255x1 double</div>
<div class="t" style="left:1472.40px;top:345.20px;font-size:20px;color:#000;transform:scaleX(1.0610);transform-origin:0 0;">countries</div>
<div class="t" style="left:1643.40px;top:345.03px;font-size:20.2px;color:#2e6293;font-style:italic;transform:scaleX(1.0500);transform-origin:0 0;">3536x1 cell</div>
<div class="t" style="left:1472.40px;top:370.63px;font-size:20px;color:#000;transform:scaleX(1.0455);transform-origin:0 0;">country_mask</div>
<div class="t" style="left:1643.40px;top:370.46px;font-size:20.2px;color:#2e6293;font-style:italic;transform:scaleX(1.0500);transform-origin:0 0;">3536x1 logical</div>
<div class="t" style="left:1472.40px;top:396.06px;font-size:20px;color:#000;transform:scaleX(1.0433);transform-origin:0 0;">covid_summary</div>
<div class="t" style="left:1644.45px;top:395.89px;font-size:20.2px;color:#2e6293;font-style:italic;transform:scaleX(1.0500);transform-origin:0 0;">234x3 table</div>
<div class="t" style="left:1472.40px;top:421.49px;font-size:20px;color:#000;transform:scaleX(0.9874);transform-origin:0 0;">data</div>
<div class="t" style="left:1643.40px;top:421.32px;font-size:20.2px;color:#2e6293;font-style:italic;transform:scaleX(1.0500);transform-origin:0 0;">3536x67 table</div>
<div class="t" style="left:1472.40px;top:446.92px;font-size:20px;color:#000;transform:scaleX(1.0309);transform-origin:0 0;">deaths_per_co...</div>
<div class="t" style="left:1644.45px;top:446.75px;font-size:20.2px;color:#2e6293;font-style:italic;transform:scaleX(1.0500);transform-origin:0 0;">255x1 double</div>
<div class="t" style="left:1472.40px;top:472.35px;font-size:20px;color:#000;transform:scaleX(1.0889);transform-origin:0 0;">exclusion_list</div>
<div class="t" style="left:1643.40px;top:472.18px;font-size:20.2px;color:#2e6293;font-style:italic;transform:scaleX(1.0500);transform-origin:0 0;">1x4 cell</div>
<div class="t" style="left:1471.40px;top:497.78px;font-size:20px;color:#000;">i</div>
<div class="t" style="left:1642.16px;top:497.78px;font-size:20px;color:#000;transform:scaleX(1.0420);transform-origin:0 0;">255</div>
<div class="t" style="left:1471.26px;top:523.21px;font-size:20px;color:#000;transform:scaleX(1.1438);transform-origin:0 0;">idx</div>
<div class="t" style="left:1643.40px;top:523.04px;font-size:20.2px;color:#2e6293;font-style:italic;transform:scaleX(1.0500);transform-origin:0 0;">3536x1 double</div>
<div class="t" style="left:1471.33px;top:548.64px;font-size:20px;color:#000;transform:scaleX(1.0693);transform-origin:0 0;">is_country</div>
<div class="t" style="left:1644.45px;top:548.47px;font-size:20.2px;color:#2e6293;font-style:italic;transform:scaleX(1.0500);transform-origin:0 0;">238x1 logical</div>
<div class="t" style="left:1472.40px;top:574.07px;font-size:20px;color:#000;transform:scaleX(1.0626);transform-origin:0 0;">top_countries</div>
<div class="t" style="left:1643.40px;top:573.90px;font-size:20.2px;color:#2e6293;font-style:italic;transform:scaleX(1.0500);transform-origin:0 0;">10x3 table</div>
<div class="t" style="left:1472.40px;top:599.50px;font-size:20px;color:#000;transform:scaleX(1.0723);transform-origin:0 0;">top_countries_...</div>
<div class="t" style="left:1643.40px;top:599.33px;font-size:20.2px;color:#2e6293;font-style:italic;transform:scaleX(1.0500);transform-origin:0 0;">5x3 table</div>
<div class="t" style="left:1472.40px;top:624.93px;font-size:20px;color:#000;transform:scaleX(1.0200);transform-origin:0 0;">total_cases</div>
<div class="t" style="left:1643.40px;top:624.76px;font-size:20.2px;color:#2e6293;font-style:italic;transform:scaleX(1.0500);transform-origin:0 0;">3536x1 double</div>
<div class="t" style="left:1472.40px;top:650.36px;font-size:20px;color:#000;transform:scaleX(1.0480);transform-origin:0 0;">total_deaths</div>
<div class="t" style="left:1643.40px;top:650.19px;font-size:20.2px;color:#2e6293;font-style:italic;transform:scaleX(1.0500);transform-origin:0 0;">3536x1 double</div>
<div class="t" style="left:1471.31px;top:675.79px;font-size:20px;color:#000;transform:scaleX(1.0874);transform-origin:0 0;">unique_countr...</div>
<div class="t" style="left:1644.45px;top:675.62px;font-size:20.2px;color:#2e6293;font-style:italic;transform:scaleX(1.0500);transform-origin:0 0;">255x1 cell</div>
</div>
<div id="figsh"></div>
<div id="fig">
<div class="a" style="left:417px;top:145px;width:837px;height:43px;background:#f2f2f2"></div>
<div class="a" style="left:417px;top:186.8px;width:837px;height:32.2px;background:#f9f9f9;border-top:1px solid #e2e2e2"></div>
<div class="a" style="left:417px;top:218px;width:837px;height:1.3px;background:#cfcfcf"></div>
<div class="a" style="left:417px;top:219.3px;width:837px;height:41px;background:#f0f0f0"></div>
<div class="a" style="left:417px;top:260px;width:837px;height:1.3px;background:#cdcdcd"></div>
<div class="a" style="left:428.0px;top:156.9px;width:18.2px;height:18.2px;border-radius:50%;background:#ed6a5e;border:0.8px solid #d5554a"></div>
<div class="a" style="left:458.0px;top:156.9px;width:18.2px;height:18.2px;border-radius:50%;background:#f5be4f;border:0.8px solid #d9a33c"></div>
<div class="a" style="left:488.0px;top:156.9px;width:18.2px;height:18.2px;border-radius:50%;background:#61c454;border:0.8px solid #4ba83f"></div>
<svg class="a" style="left:1236px;top:197px" width="13" height="11"><path d="M1,2.5 L4,1 L9,6.5 M4.5,9.5 L10.5,9 L10.8,3 Z" stroke="#222" stroke-width="1.6" fill="#222"/></svg>
<svg class="a" style="left:0;top:0" width="1700" height="1148"><path d="M762.0,566.3 L762.00,352.90 A213.4,213.4 0 0 0 549.24,582.86 Z" fill="#3e26a8" stroke="#1a1a1a" stroke-width="0.8" stroke-linejoin="round"/><path d="M762.0,566.3 L549.24,582.86 A213.4,213.4 0 0 0 719.45,775.42 Z" fill="#3479f2" stroke="#1a1a1a" stroke-width="0.8" stroke-linejoin="round"/><path d="M762.0,566.3 L719.45,775.42 A213.4,213.4 0 0 0 949.89,667.47 Z" fill="#56bdb8" stroke="#1a1a1a" stroke-width="0.8" stroke-linejoin="round"/><path d="M762.0,566.3 L949.89,667.47 A213.4,213.4 0 0 0 940.46,449.29 Z" fill="#cbbc3b" stroke="#1a1a1a" stroke-width="0.8" stroke-linejoin="round"/><path d="M762.0,566.3 L940.46,449.29 A213.4,213.4 0 0 0 762.00,352.90 Z" fill="#f9fa54" stroke="#1a1a1a" stroke-width="0.8" stroke-linejoin="round"/></svg>
<div class="a" style="left:1029.3px;top:310px;width:159.5px;height:91.7px;background:#fff;border:1px solid #3a3a3a"></div>
<div class="a" style="left:1035px;top:315.15px;width:45.5px;height:12.5px;background:#3e26a8;border:0.8px solid #2a2a2a"></div>
<div class="a" style="left:1035px;top:332.30px;width:45.5px;height:12.5px;background:#3479f2;border:0.8px solid #2a2a2a"></div>
<div class="a" style="left:1035px;top:349.45px;width:45.5px;height:12.5px;background:#56bdb8;border:0.8px solid #2a2a2a"></div>
<div class="a" style="left:1035px;top:366.60px;width:45.5px;height:12.5px;background:#cbbc3b;border:0.8px solid #2a2a2a"></div>
<div class="a" style="left:1035px;top:383.75px;width:45.5px;height:12.5px;background:#f9fa54;border:0.8px solid #2a2a2a"></div>
<svg class="a" style="left:0px;top:0px" width="0" height="0"><defs><linearGradient id="gpg" x1="0" y1="0" x2="1" y2="1"><stop offset="0" stop-color="#ffffff"/><stop offset="1" stop-color="#cfdcf8"/></linearGradient><linearGradient id="gfo" x1="0" y1="0" x2="0" y2="1"><stop offset="0" stop-color="#fbe98a"/><stop offset="1" stop-color="#e9b93a"/></linearGradient><linearGradient id="gcb" x1="0" y1="0" x2="0" y2="1"><stop offset="0" stop-color="#8e86de"/><stop offset="0.4" stop-color="#7fd9ea"/><stop offset="0.7" stop-color="#efe88c"/><stop offset="1" stop-color="#f3a08c"/></linearGradient><linearGradient id="gsv" x1="0" y1="0" x2="1" y2="1"><stop offset="0" stop-color="#6f6ad6"/><stop offset="1" stop-color="#4038a8"/></linearGradient></defs></svg>
<svg class="a" style="left:422px;top:227px" width="28" height="27"><path d="M6.8,3.3 L18.5,3.3 L24.8,9.5 L24.8,24.3 L6.8,24.3 Z" fill="#8f9cc4" opacity="0.6" transform="translate(0.9,0.9)"/><path d="M5.8,2.5 L17.8,2.5 L24,8.7 L24,23.6 L5.8,23.6 Z" fill="url(#gpg)" stroke="#6e82bb" stroke-width="1.2"/><path d="M17.8,2.5 L17.8,8.7 L24,8.7 Z" fill="#9fb0dc" stroke="#6e82bb" stroke-width="0.8"/><g stroke="#e8703a" stroke-width="1.5"><path d="M6,1.2 L6,10.8 M1.2,6 L10.8,6 M2.6,2.6 L9.4,9.4 M9.4,2.6 L2.6,9.4"/></g><circle cx="6" cy="6" r="2.7" fill="#f3a070"/></svg>
<svg class="a" style="left:461px;top:227px" width="28" height="27"><path d="M14,7 C15,3.5 19.5,2.5 22,5.2" fill="none" stroke="#7b93c2" stroke-width="1.8"/><polygon points="24.8,3 24.3,8.6 19.5,6.2" fill="#5d79b4"/><path d="M2.5,8 C2.5,6.2 3.5,5.3 5,5.3 L10,5.3 L12,7.6 L20.5,7.6 C21.8,7.6 22.3,8.3 22.3,9.5 L22.3,12 L2.5,12 Z" fill="#e3b63c" stroke="#c2952a" stroke-width="0.9"/><path d="M5.5,11 L24,11 C24.8,11 25,11.6 24.7,12.4 L21.8,22.5 C21.5,23.6 21,24 20,24 L3.5,24 C2.6,24 2.3,23.5 2.5,22.6 Z" fill="url(#gfo)" stroke="#c2952a" stroke-width="1"/><path d="M2.5,9 L2.5,22.6" stroke="#c2952a" stroke-width="1"/></svg>
<svg class="a" style="left:501px;top:228px" width="26" height="26"><rect x="3.2" y="3.3" width="21.2" height="21.2" fill="#7f80b0" opacity="0.5"/><path d="M2.2,2.3 L23.2,2.3 L23.2,23.5 L4.8,23.5 L2.2,20.9 Z" fill="url(#gsv)" stroke="#3a3592" stroke-width="0.9"/><rect x="6.2" y="3" width="12.6" height="10.2" fill="#f4f6fc"/><rect x="7.5" y="16.2" width="10.2" height="7" fill="#2a2770"/><rect x="12.3" y="17.3" width="3.6" height="5" fill="#e7e9f6"/></svg>
<svg class="a" style="left:540px;top:227px" width="26" height="27"><path d="M5,3 L14.5,1.6 L17.5,11 L8,12 Z" fill="#d4e5fa" stroke="#9db4d8" stroke-width="0.8"/><ellipse cx="12.5" cy="18.5" rx="10.2" ry="5.2" fill="#a9a9a9"/><path d="M2.5,13.5 C2.5,10 8,9.5 12.5,9.5 C17,9.5 22.5,10 22.5,13.5 L22.5,18 C22.5,21.5 17,22.8 12.5,22.8 C8,22.8 2.5,21.5 2.5,18 Z" fill="#d6d6d6" stroke="#8e8e8e" stroke-width="0.9"/><path d="M3,14.5 C6,17 19,17 22,14.5" fill="none" stroke="#8b8b8b" stroke-width="1.3"/><path d="M5,19.3 C8,21.3 17,21.3 20,19.3" fill="none" stroke="#777" stroke-width="1.4"/><ellipse cx="12.5" cy="23" rx="5.5" ry="1.6" fill="#9a9a9a"/><circle cx="19.3" cy="15.8" r="0.9" fill="#4caf50"/></svg>
<svg class="a" style="left:589px;top:227px" width="28" height="27"><rect x="5.6" y="2" width="15.4" height="13" fill="#dfe6f6" stroke="#3d5596" stroke-width="1.3"/><rect x="5.6" y="2" width="15.4" height="2.6" fill="#3d5596"/><rect x="2.6" y="5.4" width="15.4" height="13" fill="#eef1fb" stroke="#3d5596" stroke-width="1.3"/><rect x="2.6" y="5.4" width="15.4" height="2.8" fill="#3d5596"/><rect x="5" y="15.6" width="10.5" height="7.2" rx="3.6" fill="none" stroke="#6e86c0" stroke-width="2.3"/><rect x="14.5" y="15.6" width="10.5" height="7.2" rx="3.6" fill="none" stroke="#6e86c0" stroke-width="2.3"/><rect x="11" y="18.2" width="8" height="2" fill="#33478a"/></svg>
<svg class="a" style="left:645px;top:227px" width="19" height="26"><rect x="3.2" y="3.2" width="13.4" height="21" fill="#8b93b8" opacity="0.55"/><rect x="2.4" y="2.5" width="13.4" height="20.8" fill="url(#gcb)" stroke="#3e4f94" stroke-width="1.4"/></svg>
<div class="a" style="left:678.5px;top:226px;width:27.5px;height:28.5px;border-radius:4px;background:#e7e7e7"></div>
<svg class="a" style="left:679px;top:227px" width="27" height="26"><rect x="3.2" y="3.2" width="21.4" height="21" fill="#8b93b8" opacity="0.5"/><rect x="2.5" y="2.5" width="21.4" height="20.8" fill="#e9edf9" stroke="#3e4f94" stroke-width="1.5"/><rect x="5" y="6" width="7.1" height="5.8" fill="#e85c64"/><rect x="5" y="15" width="7.1" height="5.8" fill="#6a68e6"/><rect x="15" y="7.6" width="6.7" height="1.5" fill="#111"/><rect x="15" y="16.8" width="6.7" height="1.5" fill="#111"/></svg>
<svg class="a" style="left:737px;top:229px" width="18" height="25"><path d="M2.6,1.8 L2.6,18.8 L6.6,15.2 L9.6,22.6 L12.4,21.4 L9.4,14.2 L14.8,14.2 Z" fill="#fff" stroke="#111" stroke-width="1.3" stroke-linejoin="miter"/></svg>
<svg class="a" style="left:769px;top:227px" width="27" height="27"><rect x="2.4" y="2.4" width="22.6" height="22.6" fill="#fdfdfd" stroke="#8c8c8c" stroke-width="1.1"/><rect x="2.4" y="2.4" width="22.6" height="3.2" fill="#7fa3cb" stroke="#6a8db5" stroke-width="0.6"/><rect x="14" y="6" width="10.6" height="18.6" fill="#d4d4d4"/><path d="M14,6 L14,24.6" stroke="#9a9a9a" stroke-width="0.9"/><g fill="#111"><rect x="16.2" y="10" width="6" height="1.4"/><rect x="16.2" y="14.5" width="6" height="1.4"/><rect x="16.2" y="19" width="6" height="1.4"/></g></svg>
<div class="t ns" style="left:793.82px;top:157.09px;font-size:18.8px;color:#4a4a4a;font-weight:bold;transform:scaleX(1.0823);transform-origin:0 0;">Figure 2</div>
<div class="t" style="left:429.34px;top:195.26px;font-size:19.3px;color:#000;transform:scaleX(1.1586);transform-origin:0 0;">File</div>
<div class="t" style="left:491.84px;top:195.26px;font-size:19.3px;color:#000;transform:scaleX(1.1638);transform-origin:0 0;">Edit</div>
<div class="t" style="left:558.75px;top:195.26px;font-size:19.3px;color:#000;transform:scaleX(1.1441);transform-origin:0 0;">View</div>
<div class="t" style="left:632.55px;top:195.26px;font-size:19.3px;color:#000;transform:scaleX(1.2013);transform-origin:0 0;">Insert</div>
<div class="t" style="left:718.75px;top:195.26px;font-size:19.3px;color:#000;transform:scaleX(1.2508);transform-origin:0 0;">Tools</div>
<div class="t" style="left:801.81px;top:195.26px;font-size:19.3px;color:#000;transform:scaleX(1.1882);transform-origin:0 0;">Desktop</div>
<div class="t" style="left:913.00px;top:195.26px;font-size:19.3px;color:#000;transform:scaleX(1.1566);transform-origin:0 0;">Window</div>
<div class="t" style="left:1020.04px;top:195.26px;font-size:19.3px;color:#000;transform:scaleX(1.1626);transform-origin:0 0;">Help</div>
<div class="t ns" style="left:590.20px;top:291.89px;font-size:15.6px;color:#000;font-weight:bold;transform:scaleX(1.0594);transform-origin:0 0;">Share of COVID-19 Deaths: Top 5 Countries</div>
<div class="t ns" style="left:871.94px;top:343.88px;font-size:14.2px;color:#222;transform:scaleX(1.0583);transform-origin:0 0;">16%</div>
<div class="t ns" style="left:557.00px;top:390.78px;font-size:14.2px;color:#222;transform:scaleX(1.0528);transform-origin:0 0;">26%</div>
<div class="t ns" style="left:994.91px;top:548.88px;font-size:14.2px;color:#222;transform:scaleX(1.0907);transform-origin:0 0;">17%</div>
<div class="t ns" style="left:553.70px;top:725.18px;font-size:14.2px;color:#222;transform:scaleX(1.0667);transform-origin:0 0;">21%</div>
<div class="t ns" style="left:861.50px;top:781.08px;font-size:14.2px;color:#222;transform:scaleX(1.0667);transform-origin:0 0;">20%</div>
<div class="t ns" style="left:1084.10px;top:315.06px;font-size:13.4px;color:#222;">Europe</div>
<div class="t ns" style="left:1085.10px;top:332.21px;font-size:13.4px;color:#222;">Asia</div>
<div class="t ns" style="left:1084.10px;top:349.36px;font-size:13.4px;color:#222;">North America</div>
<div class="t ns" style="left:1085.10px;top:366.51px;font-size:13.4px;color:#222;">South America</div>
<div class="t ns" style="left:1084.10px;top:383.66px;font-size:13.4px;color:#222;">European Union</div>
</div>
</body></html>
